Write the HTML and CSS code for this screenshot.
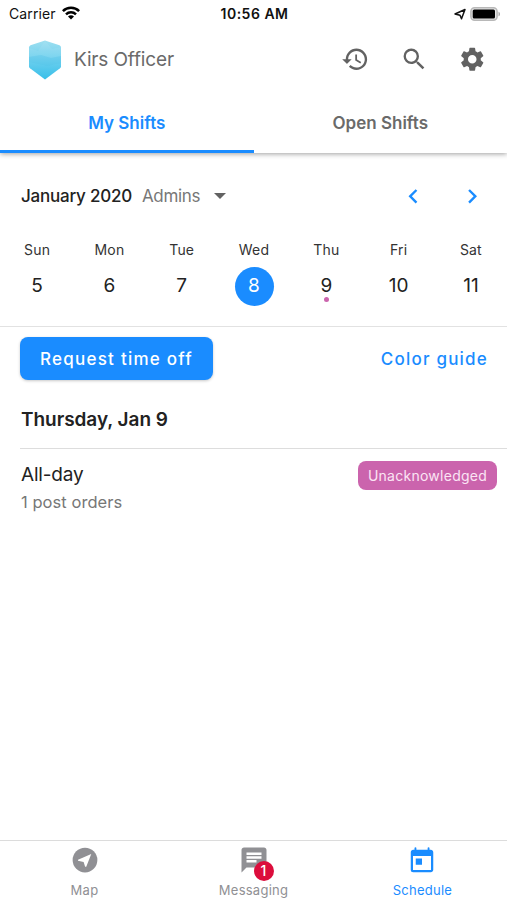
FILE: index.html
```html
<!DOCTYPE html>
<html lang="en">
<head>
<meta charset="utf-8">
<title>My Shifts</title>
<link rel="stylesheet" href="styles.css">
</head>
<body>
<div class="app">
  <header class="top">
    <div class="status">
      <div class="carrier"><span>Carrier</span>
        <svg class="wifi" viewBox="0 0 18 14"><g fill="none" stroke="#000" stroke-width="2.5"><path d="M.9 5.1C5.300 .6 12.700 .6 17.100 5.100"/><path d="M4 8.300c2.800-2.700 7.200-2.700 10 0"/></g><path d="M6 10.400c1.700-1.500 4.300-1.500 6 0L9 13.500z"/></svg>
      </div>
      <div class="clock">10:56 AM</div>
      <div class="power">
        <svg class="locate" viewBox="0 0 12 12"><path d="M1 6 11 1.500 7.500 10.800 6 7.300z" fill="none" stroke="#111" stroke-width="1.500" stroke-linejoin="round"/></svg>
        <svg class="battery" viewBox="0 0 31 14"><rect x=".9" y=".8" width="26.200" height="12.400" rx="3.700" fill="#e8e8e8" stroke="#b8b8b8" stroke-width="1.500"/><rect x="2.700" y="2.400" width="22.300" height="9.200" rx="1.500"/><path d="M28.500 4.700c2 .7 2 3.900 0 4.600z" fill="#aaa"/></svg>
      </div>
    </div>
    <div class="appbar">
      <svg class="logo" viewBox="0 0 34 40"><defs><linearGradient id="g" x1="0" y1="0" x2="0" y2="1"><stop offset="0" stop-color="#9edff0"/><stop offset=".5" stop-color="#6bcfee"/><stop offset="1" stop-color="#38bfe9"/></linearGradient></defs><path d="M17 .5 31.500 5.300Q33 6 33 7.500V26.500Q33 27.500 32 28.300L17 39.500 2 28.300Q1 27.500 1 26.500V7.500Q1 6 2.500 5.300z" fill="url(#g)"/><path d="M1 8 10 11 17 .5 24 9l9-2V16l-10 2-10-3-12 2z" fill="#fff" opacity=".07"/><path d="M1 17l12-2 10 3 10-2v7l-14 3-18-4z" fill="#39b5df" opacity=".1"/></svg>
      <h1>Kirs Officer</h1>
      <div class="actions">
        <svg class="icon" viewBox="0 0 24 24"><path d="M13 3a9 9 0 0 0-9 9H1l3.890 3.890.07.14L9 12H6c0-3.870 3.130-7 7-7s7 3.130 7 7-3.130 7-7 7c-1.930 0-3.680-.79-4.940-2.060l-1.420 1.420A8.954 8.954 0 0 0 13 21a9 9 0 0 0 0-18zm-1 5v5l4.280 2.540.72-1.210-3.500-2.080V8H12z"/></svg>
        <svg class="icon" viewBox="0 0 24 24"><path d="M15.500 14h-.79l-.28-.27A6.471 6.471 0 0 0 16 9.500 6.500 6.500 0 1 0 9.500 16c1.610 0 3.090-.59 4.230-1.570l.27.28v.79l5 4.990L20.490 19l-4.990-5zm-6 0C7.010 14 5 11.990 5 9.500S7.010 5 9.500 5 14 7.010 14 9.500 11.990 14 9.500 14z"/></svg>
        <svg class="icon" viewBox="0 0 24 24"><path d="M19.140 12.940c.04-.3.06-.61.06-.94 0-.32-.02-.64-.07-.94l2.030-1.580a.49.49 0 0 0 .12-.61l-1.920-3.320a.488.488 0 0 0-.59-.22l-2.390.96c-.5-.38-1.030-.7-1.620-.94l-.36-2.540a.484.484 0 0 0-.48-.41h-3.840c-.24 0-.43.17-.47.41l-.36 2.540c-.59.24-1.130.57-1.620.94l-2.390-.96c-.22-.08-.47 0-.59.22L2.740 8.870c-.12.21-.08.47.12.61l2.030 1.580c-.05.3-.09.63-.09.94s.02.64.07.94l-2.030 1.580a.49.49 0 0 0-.12.61l1.920 3.320c.12.22.37.29.59.22l2.390-.96c.5.38 1.030.7 1.620.94l.36 2.540c.05.24.24.41.48.41h3.840c.24 0 .44-.17.47-.41l.36-2.540c.59-.24 1.130-.56 1.620-.94l2.390.96c.22.08.47 0 .59-.22l1.920-3.320c.12-.22.07-.47-.12-.61l-2.010-1.580zM12 15.600c-1.980 0-3.600-1.620-3.600-3.600s1.620-3.600 3.600-3.600 3.600 1.620 3.600 3.600-1.620 3.600-3.600 3.600z"/></svg>
      </div>
    </div>
    <nav class="tabs">
      <a class="tab active"><span>My Shifts</span></a>
      <a class="tab"><span>Open Shifts</span></a>
    </nav>
  </header>

  <section class="calendar">
    <div class="month">
      <strong>January 2020</strong>
      <span class="group">Admins</span>
      <span class="caret"></span>
      <div class="arrows">
        <svg class="icon" viewBox="0 0 24 24"><path d="M15.410 7.410 14 6l-6 6 6 6 1.410-1.410L10.830 12z"/></svg>
        <svg class="icon" viewBox="0 0 24 24"><path d="M10 6 8.590 7.410 13.170 12l-4.580 4.590L10 18l6-6z"/></svg>
      </div>
    </div>
    <div class="week">
      <div class="day"><span class="name">Sun</span><span class="num">5</span></div>
      <div class="day"><span class="name">Mon</span><span class="num">6</span></div>
      <div class="day"><span class="name">Tue</span><span class="num">7</span></div>
      <div class="day"><span class="name">Wed</span><span class="num today">8</span></div>
      <div class="day"><span class="name">Thu</span><span class="num marked">9</span></div>
      <div class="day"><span class="name">Fri</span><span class="num">10</span></div>
      <div class="day"><span class="name">Sat</span><span class="num">11</span></div>
    </div>
  </section>

  <main class="content">
    <div class="buttons">
      <button class="request"><span>Request time off</span></button>
      <a class="guide">Color guide</a>
    </div>
    <h2><span>Thursday, Jan 9</span></h2>
    <div class="shift">
      <div class="info">
        <div class="time"><span>All-day</span></div>
        <div class="orders"><span>1 post orders</span></div>
      </div>
      <span class="tag"><span>Unacknowledged</span></span>
    </div>
  </main>

  <nav class="bottom">
    <a class="item">
      <svg viewBox="0 0 24 24"><circle cx="12" cy="12" r="9.900"/><path d="M17 7.100 6.400 11.700v.9l4.500 1 1.200 3.700h.9z" fill="#fff"/></svg>
      <span class="label">Map</span>
    </a>
    <a class="item">
      <span class="chat"><svg viewBox="0 0 24 24"><path d="M20 2H4c-1.100 0-1.990.9-1.990 2L2 22l4-4h14c1.100 0 2-.9 2-2V4c0-1.100-.9-2-2-2zM6 9h12v2H6V9zm8 5H6v-2h8v2zm4-6H6V6h12v2z"/></svg><span class="badge">1</span></span>
      <span class="label messaging">Messaging</span>
    </a>
    <a class="item active">
      <svg viewBox="0 0 24 24"><path d="M19 3h-1V1.700Q18 1 17.200 1Q16.500 1 16.500 1.700V3h-9V1.700Q7.500 1 6.800 1Q6 1 6 1.700V3H5c-1.110 0-1.990.9-1.990 2L3 19a2 2 0 0 0 2 2h14c1.100 0 2-.9 2-2V5c0-1.100-.9-2-2-2zm.2 16.200H4.800V8h14.400zM7 10h5v5H7z"/></svg>
      <span class="label schedule">Schedule</span>
    </a>
  </nav>
</div>
</body>
</html>
```
FILE: styles.css
```css
* { box-sizing: border-box; }
body { margin: 0; background: #fff; font-family: Inter, "Liberation Sans", sans-serif; color: #222; }
.app { width: 507px; height: 900px; display: flex; flex-direction: column; overflow: hidden; }
svg { display: block; flex: none; }
.top { height: 153px; flex: none; background: #fff; box-shadow: 0 1px 5px rgba(0,0,0,.38); display: flex; flex-direction: column; }
.status { height: 28px; padding: 0 7px 0 9px; display: grid; grid-template-columns: 1fr auto 1fr; align-items: center; color: #111; font-size: 14px; line-height: 28px; }
.carrier { display: flex; align-items: center; gap: 6px; letter-spacing: .1px; }
.wifi { width: 18px; height: 14px; margin-top: -2px; }
.clock { font-weight: 600; letter-spacing: .5px; }
.power { display: flex; justify-content: flex-end; align-items: center; gap: 4px; }
.locate { width: 12px; height: 12px; margin-top: -1px; }
.battery { width: 31px; height: 14px; margin: -1px -1px 0 0; }
.appbar { height: 63px; padding: 0 20.500px 0 28px; display: flex; align-items: center; }
.logo { width: 34px; height: 40px; }
h1 { margin: 0 0 0 12px; font-size: 19px; font-weight: 400; color: #6a6a6a; letter-spacing: -.15px; }
.actions { margin-left: auto; display: flex; gap: 30px; fill: #626262; }
.icon { width: 28.5px; height: 28.5px; }
.tabs { flex: 1; display: flex; }
.tab { flex: 1; display: flex; justify-content: center; align-items: center; border-bottom: 3px solid transparent; color: #6a6a6a; font-size: 17px; font-weight: 600; padding-top: 4px; }
.tab.active { color: #1a8cff; border-color: #1a8cff; }
.calendar { height: 174px; flex: none; border-bottom: 1px solid #e2e2e2; }
.month { height: 85px; padding: 1px 21px 0 21px; display: flex; align-items: center; font-size: 17px; }
.month strong { font-weight: 500; letter-spacing: -.22px; }
.group { margin-left: 10px; color: #777; letter-spacing: -.35px; }
.caret { margin-left: 14px; border: 6px solid transparent; border-top: 6.500px solid #626262; border-bottom: 0; margin-top: -1px; }
.arrows { margin-left: auto; display: flex; gap: 30px; fill: #1a8cff; }
.week { display: grid; grid-template-columns: repeat(7, 72.3px); justify-content: center; padding: 1px 0 0 1px; }
.day { display: flex; flex-direction: column; align-items: center; }
.name { font-size: 14px; line-height: 22px; letter-spacing: .2px; color: #333; }
.num { position: relative; margin-top: 6px; width: 39px; height: 39px; line-height: 37px; text-align: center; font-size: 19px; }
.today { background: #1a8cff; color: #fff; border-radius: 50%; }
.marked::after { content: ""; position: absolute; left: 17px; top: 30px; width: 5px; height: 5px; border-radius: 50%; background: #cb64ad; }
.content { flex: 1; padding-left: 20px; }
.buttons { margin-top: 10px; height: 43px; display: flex; align-items: center; justify-content: space-between; padding-right: 19px; }
.request { width: 193px; height: 43px; padding: 0; border: 0; border-radius: 8px; background: #1a8cff; color: #fff; font: 500 17px Inter, sans-serif; letter-spacing: 1.250px; box-shadow: 0 1px 3px rgba(0,0,0,.22); }
.guide { color: #1a8cff; font-size: 17px; font-weight: 500; letter-spacing: 1.200px; }
h2 { margin: 0; height: 69px; padding: 10px 0 0 1px; border-bottom: 1px solid #ddd; display: flex; align-items: center; font-size: 19px; font-weight: 600; letter-spacing: -.05px; }
.shift { display: flex; justify-content: space-between; align-items: flex-start; padding: 12px 10px 0 1px; }
.time { font-size: 19px; line-height: 27px; letter-spacing: -.2px; }
.orders { font-size: 16.500px; line-height: 28px; color: #777; letter-spacing: .05px; }
.tag { width: 139px; height: 29px; border-radius: 8px; background: #cb64ad; color: #fbe4f4; font-size: 14px; line-height: 30px; text-align: center; letter-spacing: .26px; }
.bottom { flex: none; height: 60px; border-top: 1px solid #dcdcdc; display: grid; grid-template-columns: repeat(3, 1fr); color: #909094; }
.item { display: flex; flex-direction: column; align-items: center; padding-top: 4px; fill: #909094; }
.item svg { width: 30px; height: 30px; }
.item.active { color: #1a8cff; fill: #1a8cff; }
.item.active svg { margin-left: -1px; margin-top: 1px; margin-bottom: -1px; }
.label { font-size: 13px; line-height: 20px; margin-top: 5px; letter-spacing: .25px; }
.chat { position: relative; }
.badge { position: absolute; left: 15px; top: 16px; width: 20px; height: 20px; border-radius: 50%; background: #dc0d3c; color: #fff; font-size: 14px; font-weight: 500; line-height: 20px; text-align: center; }
```
